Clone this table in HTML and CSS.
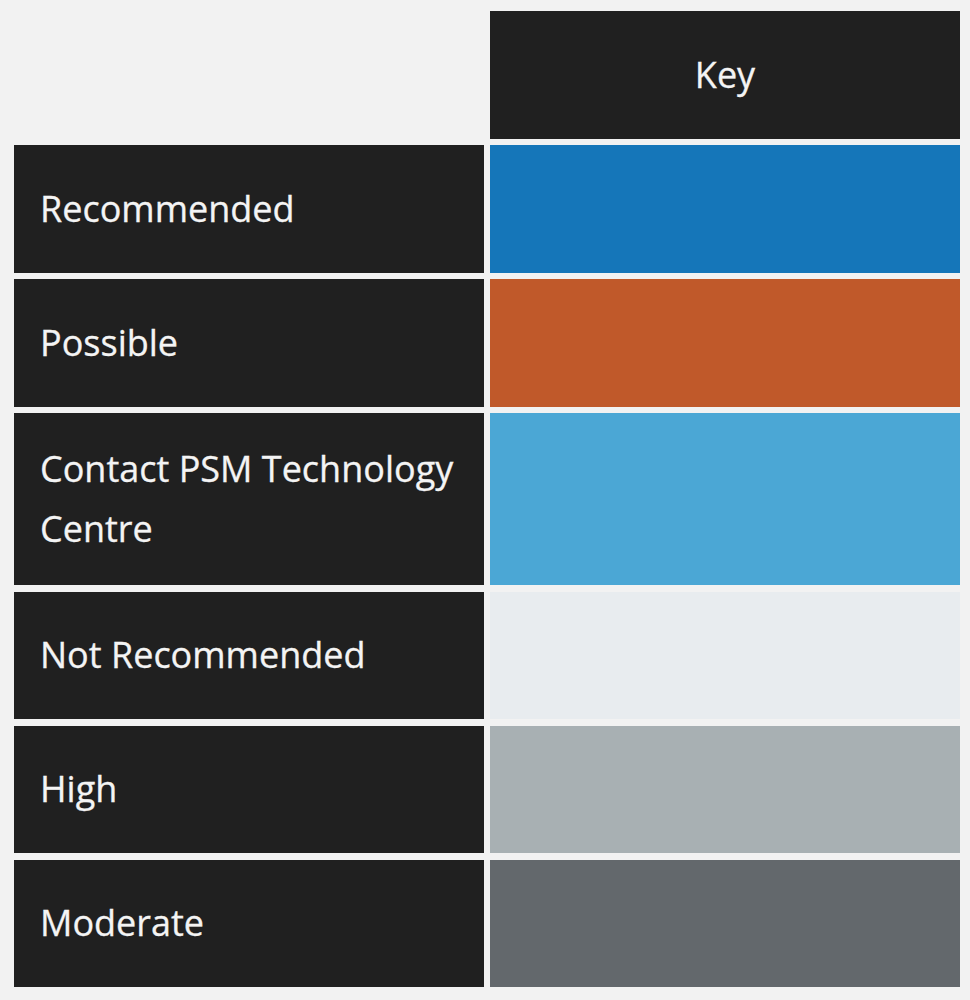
FILE: index.html
```html
<!DOCTYPE html>
<html>
<head>
<meta charset="utf-8">
<link rel="stylesheet" href="styles.css">
</head>
<body>
<div class="key-table">
  <div class="blank"></div>
  <div class="cell head">Key</div>

  <div class="cell label">Recommended</div>
  <div class="cell swatch recommended"></div>

  <div class="cell label">Possible</div>
  <div class="cell swatch possible"></div>

  <div class="cell label">Contact PSM Technology Centre</div>
  <div class="cell swatch contact"></div>

  <div class="cell label">Not Recommended</div>
  <div class="cell swatch not-recommended"></div>

  <div class="cell label">High</div>
  <div class="cell swatch high"></div>

  <div class="cell label">Moderate</div>
  <div class="cell swatch moderate"></div>
</div>
</body>
</html>
```

FILE: styles.css
```css
html, body {
  margin: 0;
  padding: 0;
  background: #f2f2f2;
}

body {
  font-family: "Open Sans", "Liberation Sans", sans-serif;
  width: 970px;
  height: 1000px;
  overflow: hidden;
}

.key-table {
  display: grid;
  grid-template-columns: 470px 470px;
  grid-auto-rows: minmax(127.5px, auto);
  column-gap: 6px;
  row-gap: 6.5px;
  padding: 11px 10px 0 14px;
}

.cell {
  box-sizing: border-box;
  display: flex;
  align-items: center;
  color: #f4f4f4;
  font-size: 36px;
  line-height: 60px;
  -webkit-text-stroke: 0.3px #f4f4f4;
}

.head {
  background: #202020;
  justify-content: center;
}

.label {
  background: #202020;
  padding: 26px 20px 26px 26px;
}

.recommended { background: #1576b9; }
.possible { background: #c0592a; }
.contact { background: #4ba7d5; }
.not-recommended { background: #e8ecef; }
.high { background: #a8b0b3; }
.moderate { background: #63686c; }
```
